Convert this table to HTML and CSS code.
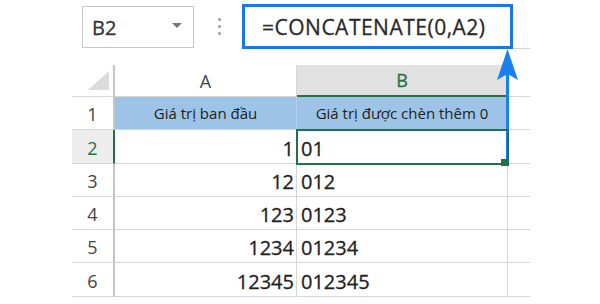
FILE: index.html
```html
<!DOCTYPE html>
<html lang="vi">
<head>
    <meta charset="UTF-8">
    <meta name="viewport" content="width=device-width, initial-scale=1.0">
    <title>CONCATENATE - thêm số 0</title>
    <link rel="stylesheet" href="styles.css">
</head>
<body>
    <div class="page">
        <div class="toolbar">
            <div class="name-box">
                <span>B2</span>
                <span class="caret"></span>
            </div>
            <div class="dots"><i></i><i></i><i></i></div>
            <div class="formula-box">=CONCATENATE(0,A2)</div>
            <div class="bar-line"></div>
        </div>

        <div class="sheet">
            <!-- tiêu đề cột -->
            <div class="cell corner"><span class="tri"></span></div>
            <div class="cell ch">A</div>
            <div class="cell ch sel">B</div>
            <div class="cell cc"></div>

            <div class="cell rh">1</div>
            <div class="cell hd">Giá trị ban đầu</div>
            <div class="cell hd">Giá trị được chèn thêm 0</div>
            <div class="cell cc"></div>

            <div class="cell rh sel">2</div>
            <div class="cell num">1</div>
            <div class="cell txt active">01<span class="handle"></span></div>
            <div class="cell cc"></div>

            <div class="cell rh">3</div>
            <div class="cell num">12</div>
            <div class="cell txt">012</div>
            <div class="cell cc"></div>

            <div class="cell rh">4</div>
            <div class="cell num">123</div>
            <div class="cell txt">0123</div>
            <div class="cell cc"></div>

            <div class="cell rh">5</div>
            <div class="cell num">1234</div>
            <div class="cell txt">01234</div>
            <div class="cell cc"></div>

            <div class="cell rh">6</div>
            <div class="cell num">12345</div>
            <div class="cell txt">012345</div>
            <div class="cell cc"></div>
        </div>

        <!-- mũi tên chỉ từ ô B2 lên thanh công thức -->
        <svg class="pointer" width="600" height="304" viewBox="0 0 600 304">
            <rect x="506" y="70" width="3" height="92" fill="#1a80ee"/>
            <polygon points="507.5,49 518,80 507.5,74 497,80" fill="#1a80ee"/>
        </svg>
    </div>
</body>
</html>
```

FILE: styles.css
```css
body {
    margin: 0;
    background: #fff;
    font-family: "Open Sans", "Noto Sans", sans-serif;
    color: #1f1f1f;
}
.page {
    position: relative;
    width: 600px;
    height: 304px;
    overflow: hidden;
    background: #fff;
}

/* thanh tên ô + công thức */
.toolbar {
    display: flex;
    align-items: flex-start;
    height: 65px;
    padding-left: 82px;
}
.name-box {
    box-sizing: border-box;
    margin-top: 6px;
    width: 112px;
    height: 42px;
    border: 1px solid #c6c6c6;
    display: flex;
    align-items: center;
    justify-content: space-between;
    padding: 0 11px 0 9px;
    font-size: 20px;
    color: #333;
    -webkit-text-stroke: 0.3px #333;
}
.caret {
    width: 0;
    height: 0;
    border-left: 5px solid transparent;
    border-right: 5px solid transparent;
    border-top: 5px solid #777;
    margin-bottom: 4px;
}
.dots {
    display: flex;
    flex-direction: column;
    gap: 4px;
    margin: 18px 0 0 24px;
}
.dots i {
    width: 3px;
    height: 3px;
    border-radius: 50%;
    background: #9a9a9a;
}
.formula-box {
    box-sizing: border-box;
    margin: 4px 0 0 21px;
    width: 271px;
    height: 45px;
    border: 3px solid #1a78e6;
    padding-left: 17px;
    display: flex;
    align-items: center;
    font-size: 21px;
    letter-spacing: 0.5px;
    color: #2a2a2a;
    -webkit-text-stroke: 0.3px #2a2a2a;
}
.bar-line {
    width: 17px;
    height: 48px;
    border-bottom: 1px solid #d4d4d4;
}

/* lưới bảng tính */
.sheet {
    display: grid;
    margin-left: 72px;
    grid-template-columns: 43px 182px 211px 22px;
    grid-template-rows: 32px 33px 34px 33px 33px 33px 34px;
}
.cell {
    box-sizing: border-box;
    display: flex;
    align-items: center;
    border-right: 1px solid #d6d6d6;
    border-bottom: 1px solid #d6d6d6;
    white-space: nowrap;
}
.corner {
    justify-content: flex-end;
    align-items: flex-end;
    padding: 0 4px 6px 0;
    border-right: 2px solid #c4c4c4;
}
.tri {
    width: 21px;
    height: 19px;
    background: #dcdcdc;
    clip-path: polygon(100% 0, 100% 100%, 0 100%);
}
.ch {
    justify-content: center;
    font-size: 18px;
    color: #444;
}
.ch.sel {
    background: #e1e1e1;
    color: #217346;
    border-bottom: 2px solid #217346;
    -webkit-text-stroke: 0.3px #217346;
}
.cc {
    border-right: none;
}
.rh {
    justify-content: center;
    font-size: 18px;
    color: #444;
    border-right: 2px solid #c4c4c4;
    padding-top: 2px;
}
.rh.sel {
    background: #ededed;
    color: #217346;
    border-right-color: #217346;
}
.hd {
    justify-content: center;
    background: #9dc3e6;
    border-right-color: #b3d0ec;
    border-bottom-color: #c4d6e8;
    font-size: 15px;
    color: #1f1f1f;
}
.num,
.txt {
    font-size: 20px;
    padding-top: 3px;
    -webkit-text-stroke: 0.3px #1f1f1f;
}
.num {
    justify-content: flex-end;
    padding-right: 2px;
}
.txt {
    padding-left: 4px;
}
.active {
    position: relative;
    z-index: 1;
    outline: 2px solid #217346;
    outline-offset: -1px;
}
.handle {
    position: absolute;
    right: -2px;
    bottom: -3px;
    width: 8px;
    height: 7px;
    background: #217346;
}
.pointer {
    position: absolute;
    left: 0;
    top: 0;
    pointer-events: none;
}
```
